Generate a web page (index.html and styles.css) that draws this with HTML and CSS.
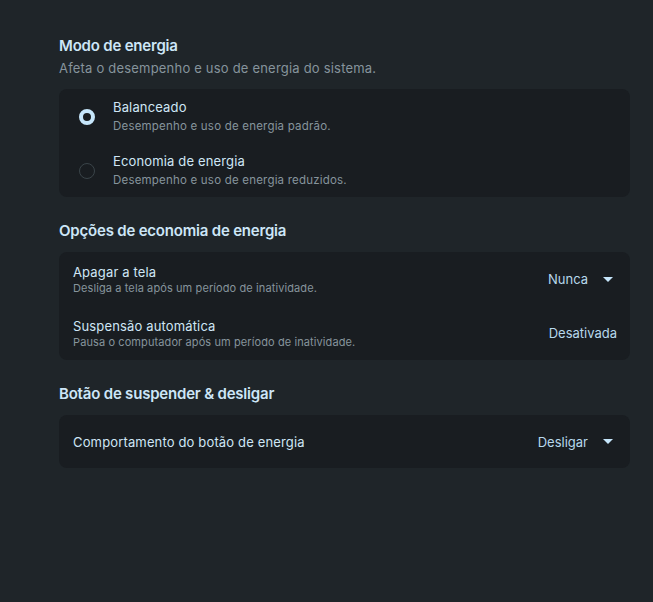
FILE: index.html
```html
<!DOCTYPE html>
<html lang="pt">
  <head>
    <meta charset="UTF-8" />
    <meta name="viewport" content="width=device-width, initial-scale=1.0" />
    <title>Energia</title>
    <link rel="stylesheet" href="styles.css">
  </head>
  <body>
    <div class="page">
      <section class="group">
        <p class="group-title">Modo de energia</p>
        <p class="group-desc">Afeta o desempenho e uso de energia do sistema.</p>
        <div class="card">
          <div class="radio-row">
            <span class="radio checked"></span>
            <div class="labels">
              <p class="label">Balanceado</p>
              <p class="sub">Desempenho e uso de energia padrão.</p>
            </div>
          </div>
          <div class="radio-row">
            <span class="radio"></span>
            <div class="labels">
              <p class="label">Economia de energia</p>
              <p class="sub">Desempenho e uso de energia reduzidos.</p>
            </div>
          </div>
        </div>
      </section>

      <section class="group">
        <p class="group-title">Opções de economia de energia</p>
        <div class="card">
          <div class="row">
            <div class="labels">
              <p class="label">Apagar a tela</p>
              <p class="sub small">Desliga a tela após um período de inatividade.</p>
            </div>
            <div class="value">Nunca <span class="caret"></span></div>
          </div>
          <div class="row">
            <div class="labels">
              <p class="label">Suspensão automática</p>
              <p class="sub small">Pausa o computador após um período de inatividade.</p>
            </div>
            <div class="value">Desativada</div>
          </div>
        </div>
      </section>

      <section class="group">
        <p class="group-title">Botão de suspender &amp; desligar</p>
        <div class="card">
          <div class="row single">
            <p class="label">Comportamento do botão de energia</p>
            <div class="value">Desligar <span class="caret"></span></div>
          </div>
        </div>
      </section>
    </div>
  </body>
</html>
```

FILE: styles.css
```css
body {
  margin: 0;
  padding: 0;
  background-color: #1f2529;
  font-family: Inter, "Noto Sans", sans-serif;
  color: #cfe6f5;
}

p {
  margin: 0;
}

.page {
  width: 571px;
  margin-left: 59px;
  padding-top: 37px;
}

.group {
  margin-bottom: 25px;
}

.group-title {
  font-size: 15px;
  font-weight: 600;
  letter-spacing: -0.2px;
  color: #cde6f7;
  line-height: 18px;
  margin-bottom: 4px;
}

.group-desc {
  font-size: 13px;
  letter-spacing: 0.2px;
  color: #86949c;
  line-height: 18px;
  margin-top: 2px;
}

.card {
  background-color: #191d21;
  border-radius: 8px;
  margin-top: 12px;
}

.group-desc + .card {
  margin-top: 12px;
}

.radio-row {
  display: flex;
  align-items: center;
  height: 54px;
  padding-left: 21px;
}

.radio {
  width: 16px;
  height: 16px;
  border-radius: 50%;
  border: 1px solid #3a4449;
  box-sizing: border-box;
  margin-left: -1px;
  margin-right: 18px;
  margin-top: 2px;
}

.radio.checked {
  border: 4px solid #c6e6fb;
  background-color: #191d21;
}

.label {
  font-size: 13px;
  letter-spacing: 0.15px;
  line-height: 16px;
  color: #cfe6f5;
}

.sub {
  font-size: 11.5px;
  letter-spacing: 0.2px;
  line-height: 16px;
  color: #86949c;
  margin-top: 3px;
}

.sub.small {
  font-size: 11px;
  letter-spacing: 0.1px;
  line-height: 14px;
  margin-top: 1px;
}

.row {
  display: flex;
  align-items: center;
  justify-content: space-between;
  height: 54px;
  padding: 0 13px 0 14px;
}

.row.single {
  height: 53px;
}

.value {
  display: flex;
  align-items: center;
  font-size: 13px;
  color: #b7d8ec;
}

.caret {
  width: 0;
  height: 0;
  border-left: 5px solid transparent;
  border-right: 5px solid transparent;
  border-top: 5px solid #c6e6fb;
  margin-left: 15px;
  margin-right: 4px;
}
```
